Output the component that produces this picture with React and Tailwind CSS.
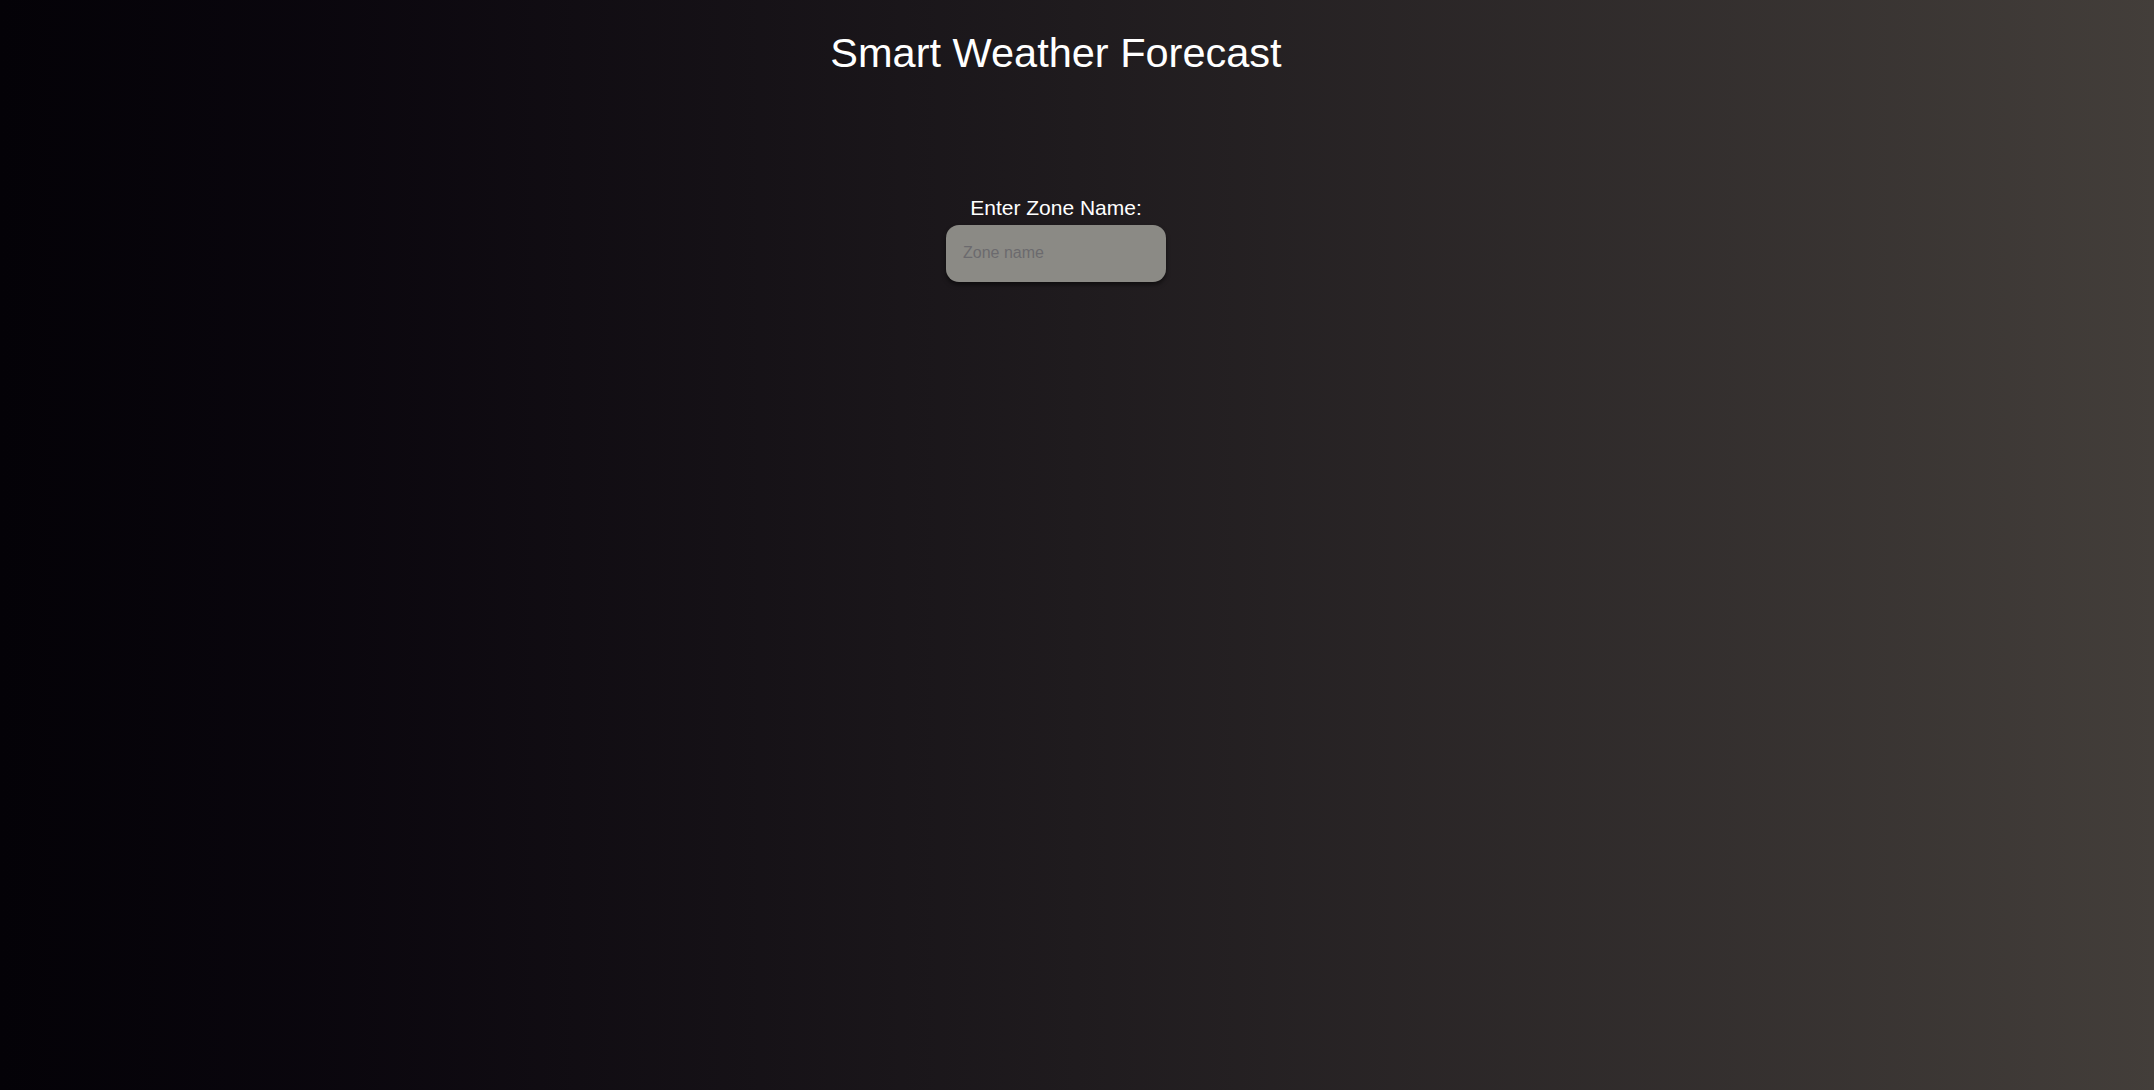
import React from 'react';

const App = () => {
  return (
    <div className="min-h-[1090px] w-full bg-linear-to-r from-[#040207] via-[#1f1b1e] to-[#433e3a] font-['Liberation_Sans',Arial,sans-serif] text-white">
      <div className="w-[2112px] flex flex-col items-center">
        <h1 className="pt-[29px] text-[41.5px] leading-[1.15] font-normal">
          Smart Weather Forecast
        </h1>

        {/* zone form */}
        <div className="mt-[119px] flex flex-col items-center">
          <label htmlFor="zone" className="text-[21px] leading-[1.15]">
            Enter Zone Name:
          </label>
          <input
            id="zone"
            type="text"
            placeholder="Zone name"
            className="mt-[5px] w-[220px] h-[57px] rounded-[13px] bg-[#8b8a85] px-[17px] text-[16px] text-[#333] placeholder:text-[#6b6a6e] shadow-[0_3px_4px_rgba(0,0,0,0.5)] outline-none"
          />
        </div>
      </div>
    </div>
  );
};

export default App;
